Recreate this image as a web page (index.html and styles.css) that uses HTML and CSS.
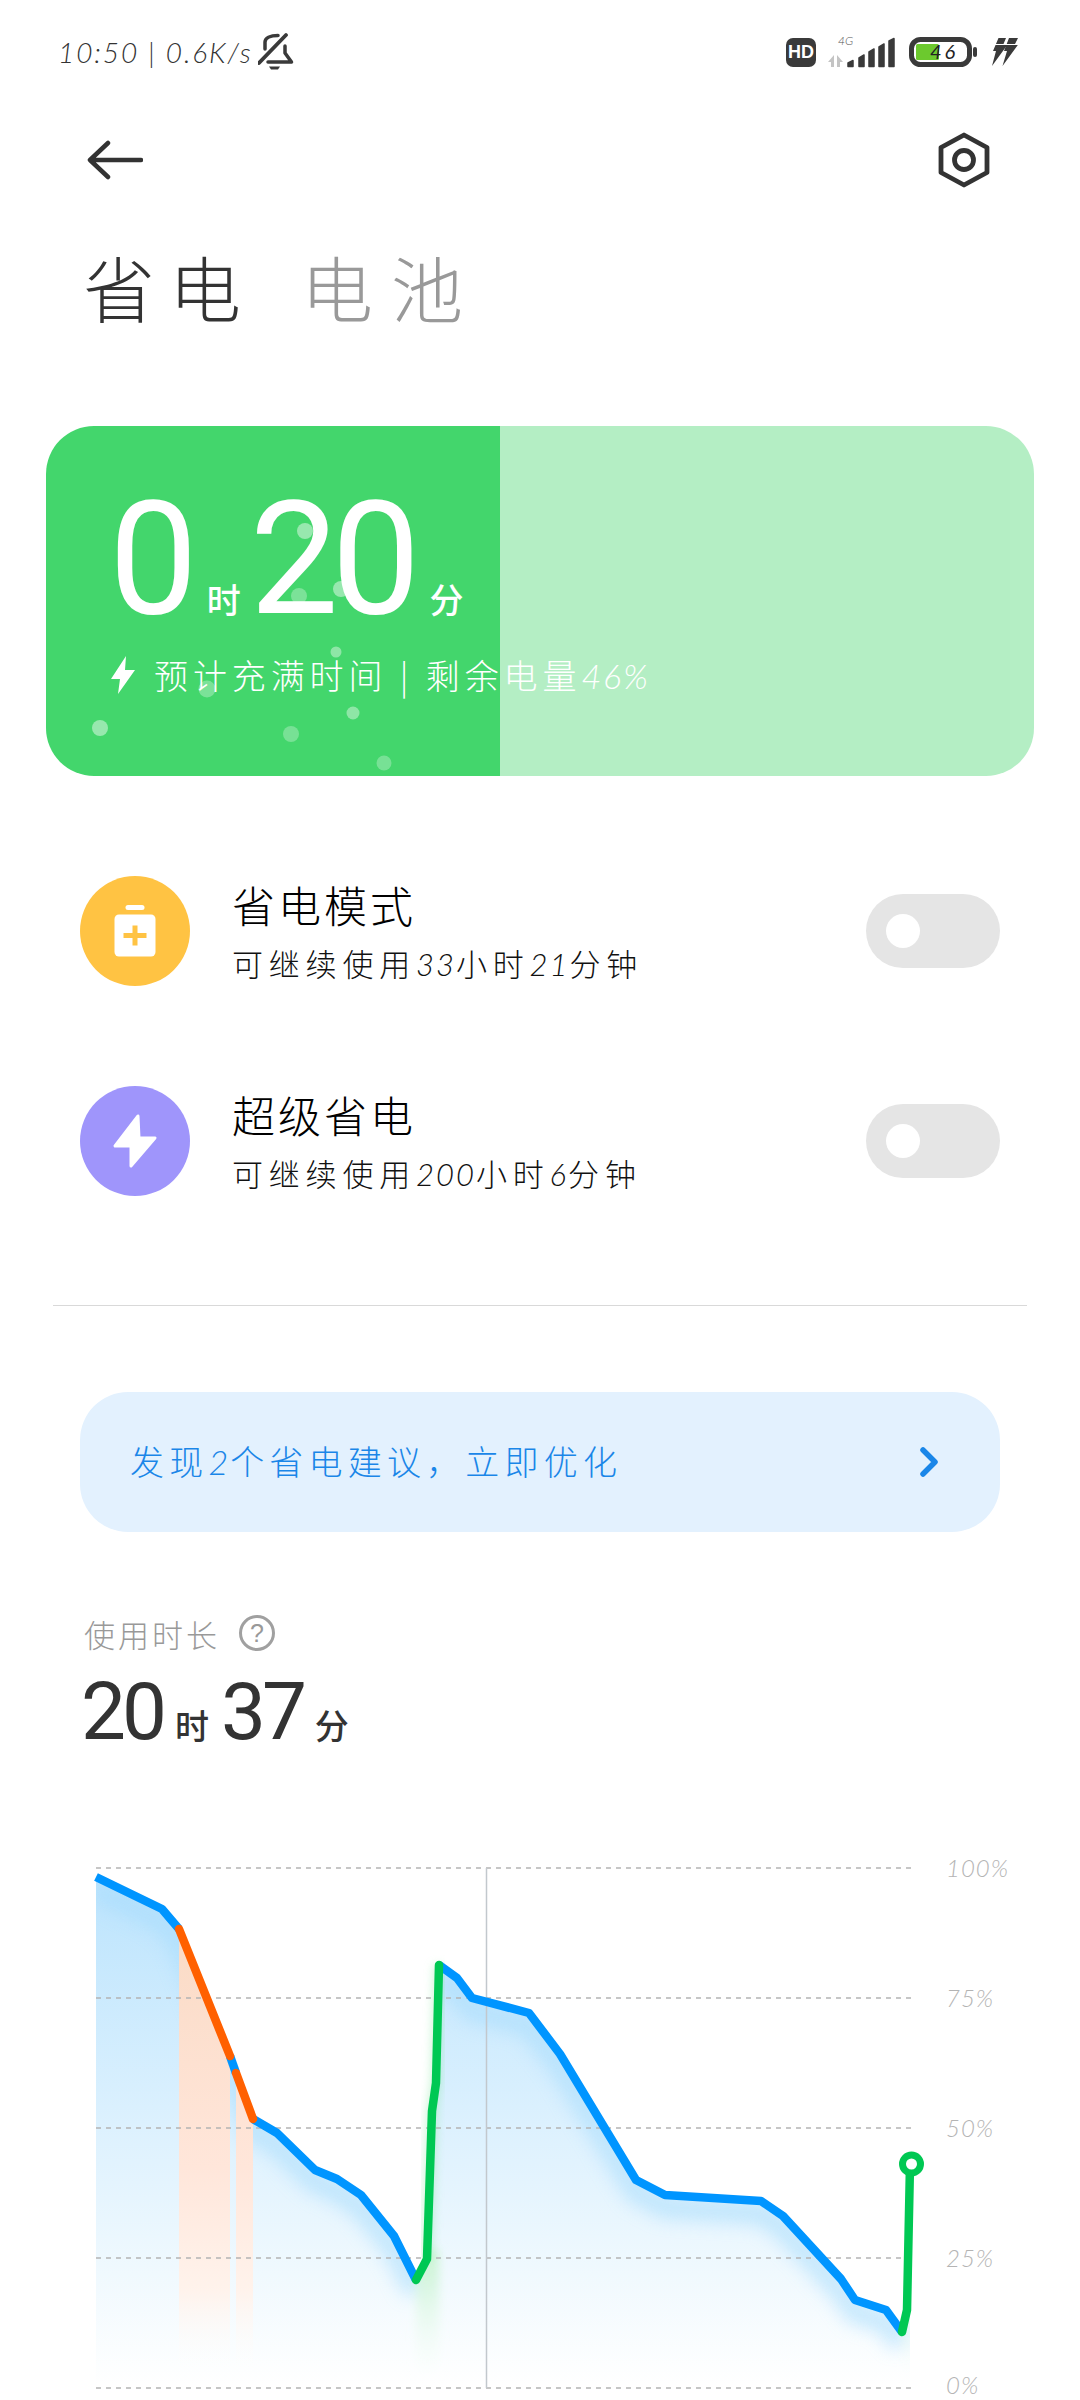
FILE: index.html
```html
<!DOCTYPE html>
<html lang="zh-CN">
<head>
  <meta charset="UTF-8">
  <meta name="viewport" content="width=device-width, initial-scale=1.0">
  <title>省电</title>
  <link rel="stylesheet" href="styles.css">
</head>
<body>
  <div class="status">
    <span class="status-text">10:50 | 0.6K/s</span>
    <svg class="bell" width="36" height="40" viewBox="0 0 36 40">
      <path d="M7 17 V10 C7 6 12 3.500 20 3.500 M27 14 V21 L33.500 30 H10" fill="none" stroke="#3a3a3a" stroke-width="3.500" stroke-linecap="round" stroke-linejoin="round"/>
      <path d="M11 34.500 H22 L20 37.500 H13 Z" fill="#3a3a3a"/>
      <path d="M1 31 L28 3" stroke="#3a3a3a" stroke-width="3.800" stroke-linecap="round"/>
    </svg>
    <div class="status-right">
      <span class="hd">HD</span>
      <svg class="signal" width="68" height="40" viewBox="0 -3 68 40">
        <text x="10" y="10" class="net-label">4G</text>
        <path d="M0 27 L6 20 V32 H3 V27 Z M9 20 L15 27 H12 V32 H9 Z" fill="#c4c4c4"/>
        <g fill="#3a3a3a" stroke="#3a3a3a" stroke-width="1.500" stroke-linejoin="round">
          <path d="M20 28 L25 25.500 V31.500 H20 Z"/>
          <path d="M31 23 L36 20 V31.500 H31 Z"/>
          <path d="M41 17 L46 14 V31.500 H41 Z"/>
          <path d="M51 12 L56 9 V31.500 H51 Z"/>
          <path d="M61 6 L66 3.500 V31.500 H61 Z"/>
        </g>
      </svg>
      <svg class="battery" width="70" height="30" viewBox="0 0 70 30">
        <rect x="2.500" y="2.500" width="58" height="25" rx="9" fill="none" stroke="#3a3a3a" stroke-width="5"/>
        <rect x="7" y="7" width="23" height="16" rx="1.500" fill="#6cc92e"/>
        <rect x="64" y="10" width="4" height="10" rx="2" fill="#3a3a3a"/>
        <text x="21" y="22" class="batt-label">46</text>
      </svg>
      <svg class="charge" width="26" height="28" viewBox="0 0 26 28">
        <g fill="#3a3a3a">
          <path d="M6.500 0 H14 L11.500 6 H16 L0 28 L4 13 H1 Z"/>
          <path d="M17 0 H26 L23 6 H26.500 L10.500 28 L15 13 H12 Z"/>
        </g>
        <path d="M3 6.500 H26" stroke="#fff" stroke-width="1"/>
      </svg>
    </div>
  </div>

  <div class="nav">
    <svg width="56" height="40" viewBox="0 0 56 40">
      <path d="M54 20 H4 M21 3 L3 20 L21 37" fill="none" stroke="#333" stroke-width="4.500" stroke-linecap="round" stroke-linejoin="round"/>
    </svg>
    <svg width="52" height="56" viewBox="0 0 52 56">
      <path d="M26 3 L49 15.500 V40.500 L26 53 L3 40.500 V15.500 Z" fill="none" stroke="#333" stroke-width="4.800" stroke-linejoin="round"/>
      <circle cx="26" cy="28" r="9.500" fill="none" stroke="#333" stroke-width="4.800"/>
    </svg>
  </div>

  <div class="tabs">
    <span class="tab active">省电</span>
    <span class="tab">电池</span>
  </div>

  <div class="card">
    <svg class="bubbles" width="988" height="350" viewBox="46 426 988 350">
      <g fill="#fff">
        <circle cx="305" cy="531" r="8" opacity=".45"/>
        <circle cx="299" cy="596" r="8" opacity=".3"/>
        <circle cx="341" cy="589" r="8" opacity=".45"/>
        <circle cx="336" cy="652" r="5.500" opacity=".4"/>
        <circle cx="207" cy="689" r="8.500" opacity=".3"/>
        <circle cx="353" cy="713" r="6.500" opacity=".4"/>
        <circle cx="100" cy="728" r="8" opacity=".45"/>
        <circle cx="291" cy="734" r="8" opacity=".28"/>
        <circle cx="384" cy="763" r="7.500" opacity=".28"/>
      </g>
    </svg>
    <div class="time">
      <span class="big">0</span><span class="unit">时</span><span class="big big-gap">20</span><span class="unit">分</span>
    </div>
    <div class="charge-line">
      <svg width="26" height="40" viewBox="0 0 26 40">
        <path d="M16 1 L1 24 H10 L8 39 L25 15 H15 Z" fill="#fff"/>
      </svg>
      <span class="charge-text">预计充满时间 | 剩余电量<i class="num">46%</i></span>
    </div>
  </div>

  <div class="modes">
    <div class="mode">
      <div class="mode-icon yellow">
        <svg width="42" height="52" viewBox="0 0 42 52">
          <rect x="11.500" y="0" width="19" height="5" rx="2.500" fill="#fff"/>
          <rect x="0.500" y="9.500" width="41" height="42" rx="4.500" fill="#fff"/>
          <path d="M21 20.500 V40.500 M9.500 30.500 H32.500" stroke="#ffc343" stroke-width="5"/>
        </svg>
      </div>
      <div class="mode-text">
        <div class="mode-title">省电模式</div>
        <div class="mode-sub">可继续使用<i class="num">33</i>小时<i class="num">21</i>分钟</div>
      </div>
      <div class="toggle"><span class="knob"></span></div>
    </div>
    <div class="mode">
      <div class="mode-icon purple">
        <svg width="46" height="56" viewBox="0 0 46 56">
          <path d="M26 3 L3 33 H19 V53 L43 25 H27 Z" fill="#fff" stroke="#fff" stroke-width="3" stroke-linejoin="round"/>
        </svg>
      </div>
      <div class="mode-text">
        <div class="mode-title">超级省电</div>
        <div class="mode-sub">可继续使用<i class="num">200</i>小时<i class="num">6</i>分钟</div>
      </div>
      <div class="toggle"><span class="knob"></span></div>
    </div>
  </div>

  <div class="divider"></div>

  <div class="banner">
    <span class="banner-text">发现<i class="num">2</i>个省电建议，立即优化</span>
    <svg width="20" height="30" viewBox="0 0 20 30">
      <path d="M4 3 L16 15 L4 27" fill="none" stroke="#1a86e8" stroke-width="5.500" stroke-linecap="round" stroke-linejoin="round"/>
    </svg>
  </div>

  <div class="usage">
    <div class="usage-label">
      <span>使用时长</span>
      <span class="help">?</span>
    </div>
    <div class="usage-time">
      <span class="mid">20</span><span class="mid-unit">时</span><span class="mid mid-gap">37</span><span class="mid-unit">分</span>
    </div>
  </div>

  <svg class="chart" width="1080" height="560" viewBox="0 1840 1080 560">
    <defs>
      <linearGradient id="areaBlue" gradientUnits="userSpaceOnUse" x1="0" y1="1880" x2="0" y2="2385">
        <stop offset="0" stop-color="#bce4fd"/>
        <stop offset=".45" stop-color="#daf0fe"/>
        <stop offset=".78" stop-color="#f0f9fe"/>
        <stop offset="1" stop-color="#fff"/>
      </linearGradient>
      <linearGradient id="areaOrange" gradientUnits="userSpaceOnUse" x1="0" y1="1960" x2="0" y2="2375">
        <stop offset="0" stop-color="#fbdcc8"/>
        <stop offset=".5" stop-color="#ffe6da"/>
        <stop offset=".8" stop-color="#fff3ec"/>
        <stop offset="1" stop-color="#fff" stop-opacity="0"/>
      </linearGradient>
      <linearGradient id="areaGreen" gradientUnits="userSpaceOnUse" x1="0" y1="2270" x2="0" y2="2380">
        <stop offset="0" stop-color="#d2f5da"/>
        <stop offset="1" stop-color="#f4fdf6" stop-opacity="0"/>
      </linearGradient>
      <clipPath id="areaClip">
        <path d="M96 1877 L162 1909 L179 1929 L230 2056 L236 2073 L253 2119 L277 2133 L315 2170 L337 2179 L361 2195 L394 2236 L416 2280 L427 2259 L432 2111 L436 2083 L439 1965 L457 1978 L472 1998 L529 2013 L560 2054 L636 2180 L665 2195 L761 2201 L783 2216 L841 2279 L855 2300 L886 2310 L902 2332 L907 2310 L910 2165 L910 2388 L96 2388 Z"/>
      </clipPath>
      <filter id="soft" x="-10%" y="-10%" width="120%" height="120%">
        <feGaussianBlur stdDeviation="9"/>
      </filter>
      <filter id="softGreen" x="-50%" y="-10%" width="200%" height="120%">
        <feGaussianBlur stdDeviation="5"/>
      </filter>
    </defs>

    <g clip-path="url(#areaClip)">
      <rect x="96" y="1868" width="815" height="520" fill="url(#areaBlue)"/>
      <path d="M96 1889 L162 1921 L179 1941 L253 2131 L277 2145 L315 2182 L337 2191 L361 2207 L394 2248 L416 2292 M439 1977 L457 1990 L472 2010 L529 2025 L560 2066 L636 2192 L665 2207 L761 2213 L783 2228 L841 2291 L855 2312 L886 2322 L902 2344" fill="none" stroke="#a6dcfd" stroke-width="22" opacity=".6" filter="url(#soft)"/>
      <rect x="179" y="1929" width="51" height="450" fill="url(#areaOrange)"/>
      <rect x="236" y="2073" width="17" height="306" fill="url(#areaOrange)"/>
      <rect x="416" y="2250" width="23" height="130" fill="url(#areaGreen)" filter="url(#softGreen)"/>
      <rect x="902" y="2300" width="9" height="80" fill="url(#areaGreen)" filter="url(#softGreen)"/>
    </g>
    <path d="M427 2259 L432 2111 L436 2083 L439 1965" fill="none" stroke="#8fe8a8" stroke-width="10" opacity=".5" filter="url(#softGreen)"/>

    <g class="grid">
      <path d="M96 1868 H914"/>
      <path d="M96 1998 H914"/>
      <path d="M96 2128 H914"/>
      <path d="M96 2258 H914"/>
      <path d="M96 2388 H914"/>
    </g>
    <path d="M486.500 1868 V2388" stroke="#c2c8cd" stroke-width="1.500"/>

    <g fill="none" stroke-width="8.500" stroke-linejoin="round">
      <path d="M96 1877 L162 1909 L179 1929" stroke="#0095ff"/>
      <path d="M230 2056 L236 2073" stroke="#0095ff"/>
      <path d="M253 2119 L277 2133 L315 2170 L337 2179 L361 2195 L394 2236 L416 2280" stroke="#0095ff"/>
      <path d="M439 1965 L457 1978 L472 1998 L529 2013 L560 2054 L636 2180 L665 2195 L761 2201 L783 2216 L841 2279 L855 2300 L886 2310 L902 2332" stroke="#0095ff"/>
      <path d="M179 1929 L230 2056 M236 2073 L253 2119" stroke="#ff6000" stroke-linecap="round"/>
      <path d="M416 2280 L427 2259 L432 2111 L436 2083 L439 1965" stroke="#00c853" stroke-linecap="round"/>
      <path d="M902 2332 L907 2310 L910 2165" stroke="#00c853" stroke-linecap="round"/>
    </g>
    <circle cx="911.500" cy="2164" r="9" fill="#fff" stroke="#00c853" stroke-width="7"/>

    <g class="axis">
      <text x="946" y="1877">100%</text>
      <text x="946" y="2007">75%</text>
      <text x="946" y="2137">50%</text>
      <text x="946" y="2267">25%</text>
      <text x="946" y="2394">0%</text>
    </g>
  </svg>
</body>
</html>
```

FILE: styles.css
```css
html, body {
  margin: 0;
  padding: 0;
}
body {
  width: 1080px;
  height: 2400px;
  overflow: hidden;
  background-color: #fff;
  font-family: "Noto Sans CJK SC", "Noto Sans", sans-serif;
  font-weight: 300;
  color: #111;
}
svg {
  display: block;
}
.num {
  font-family: Lato, "Liberation Sans", sans-serif;
  font-style: italic;
  font-weight: 300;
  letter-spacing: 2px;
}

/* status bar */
.status {
  display: flex;
  align-items: center;
  height: 104px;
  padding: 0 62px 0 58px;
  box-sizing: border-box;
  color: #333;
}
.status-text {
  font-family: Lato, "Liberation Sans", sans-serif;
  font-style: italic;
  font-weight: 300;
  font-size: 28px;
  letter-spacing: 1.9px;
  white-space: nowrap;
}
.bell {
  margin-left: 5px;
}
.status-right {
  display: flex;
  align-items: center;
  margin-left: auto;
}
.hd {
  width: 30px;
  height: 29px;
  border-radius: 7px;
  background-color: #3a3a3a;
  color: #fff;
  font-family: "Liberation Sans", sans-serif;
  font-weight: 700;
  font-size: 18px;
  line-height: 29px;
  text-align: center;
}
.signal {
  margin-left: 12px;
}
.battery {
  margin-left: 13px;
}
.charge {
  margin-left: 13px;
}
.net-label {
  font-family: Lato, sans-serif;
  font-style: italic;
  font-size: 12px;
  fill: #555;
}
.batt-label {
  font-family: Lato, sans-serif;
  font-style: italic;
  font-weight: 400;
  font-size: 20px;
  letter-spacing: 3px;
  fill: #222;
}

/* header */
.nav {
  display: flex;
  align-items: center;
  justify-content: space-between;
  height: 112px;
  padding: 0 90px 0 87px;
}
.tabs {
  display: flex;
  align-items: center;
  gap: 46px;
  height: 120px;
  margin-top: 10px;
  padding-left: 83px;
}
.tab {
  font-size: 72px;
  letter-spacing: 18px;
  line-height: 1;
  color: #999;
}
.tab.active {
  letter-spacing: 14px;
  color: #333;
}

/* battery card */
.card {
  position: relative;
  height: 350px;
  margin: 80px 46px 0;
  border-radius: 48px;
  overflow: hidden;
  background: linear-gradient(90deg, #43d66c 0, #43d66c 454px, #b4eec4 454px);
  color: #fff;
}
.bubbles {
  position: absolute;
  left: 0;
  top: 0;
}
.time {
  position: relative;
  display: flex;
  align-items: baseline;
  height: 122px;
  padding: 72px 0 0 63px;
  font-family: Roboto, sans-serif;
}
.big {
  font-size: 158px;
  font-weight: 400;
  line-height: 122px;
  letter-spacing: -7px;
}
.big-gap {
  margin-left: 9px;
}
.unit {
  margin-left: 16px;
  font-family: "Noto Sans CJK SC", sans-serif;
  font-size: 34px;
  font-weight: 500;
  line-height: 1;
}
.charge-line {
  position: relative;
  display: flex;
  align-items: center;
  gap: 18px;
  margin-top: 30px;
  padding-left: 64px;
}
.charge-text {
  font-size: 34px;
  letter-spacing: 4.9px;
  white-space: nowrap;
}

/* mode rows */
.modes {
  margin-top: 50px;
}
.mode {
  display: flex;
  align-items: center;
  height: 210px;
  padding: 0 80px;
}
.mode-icon {
  display: flex;
  align-items: center;
  justify-content: center;
  flex: none;
  width: 110px;
  height: 110px;
  border-radius: 50%;
}
.yellow {
  background-color: #ffc343;
}
.purple {
  background-color: #9f95fb;
}
.mode-text {
  margin-left: 42px;
  padding-bottom: 3px;
}
.mode-title {
  font-size: 43px;
  line-height: 60px;
  letter-spacing: 3px;
  color: #000;
}
.mode-sub {
  margin-top: 7px;
  font-size: 31px;
  line-height: 44px;
  letter-spacing: 5.8px;
  color: #111;
}
.toggle {
  display: flex;
  align-items: center;
  flex: none;
  width: 134px;
  height: 74px;
  margin-left: auto;
  padding-left: 20px;
  box-sizing: border-box;
  border-radius: 37px;
  background-color: #e5e5e5;
}
.knob {
  width: 34px;
  height: 34px;
  border-radius: 50%;
  background-color: #fff;
}

.divider {
  height: 1px;
  margin: 59px 53px 0;
  background-color: #d9d9d9;
}

/* suggestion banner */
.banner {
  display: flex;
  align-items: center;
  justify-content: space-between;
  height: 140px;
  margin: 86px 80px 0;
  padding: 0 61px 0 50px;
  border-radius: 48px;
  background-color: #e3f1fe;
  color: #1a86e8;
}
.banner-text {
  padding-bottom: 4px;
  font-size: 34px;
  letter-spacing: 5.2px;
}

/* usage */
.usage {
  height: 308px;
  box-sizing: border-box;
  padding: 76px 0 0 84px;
}
.usage-label {
  display: flex;
  align-items: center;
  gap: 19px;
  height: 50px;
  font-size: 31px;
  letter-spacing: 3px;
  color: #999;
}
.help {
  width: 30px;
  height: 30px;
  border: 3px solid #a0a0a0;
  border-radius: 50%;
  font-family: "Liberation Sans", sans-serif;
  font-size: 25px;
  line-height: 30px;
  text-align: center;
  letter-spacing: 0;
}
.usage-time {
  display: flex;
  align-items: baseline;
  margin-top: 14px;
  margin-left: -3px;
  font-family: Roboto, sans-serif;
  color: #333;
}
.mid {
  font-size: 80px;
  font-weight: 400;
  line-height: 80px;
  letter-spacing: -4px;
}
.mid-gap {
  margin-left: 12px;
}
.mid-unit {
  margin-left: 12px;
  font-family: "Noto Sans CJK SC", sans-serif;
  font-size: 34px;
  font-weight: 500;
  line-height: 1;
}

/* chart */
.grid path {
  fill: none;
  stroke: #b4b4b4;
  stroke-width: 1.5;
  stroke-dasharray: 5 5;
}
.axis text {
  font-family: Lato, sans-serif;
  font-style: italic;
  font-weight: 300;
  font-size: 24px;
  letter-spacing: 1px;
  fill: #b4b4b4;
}
```
